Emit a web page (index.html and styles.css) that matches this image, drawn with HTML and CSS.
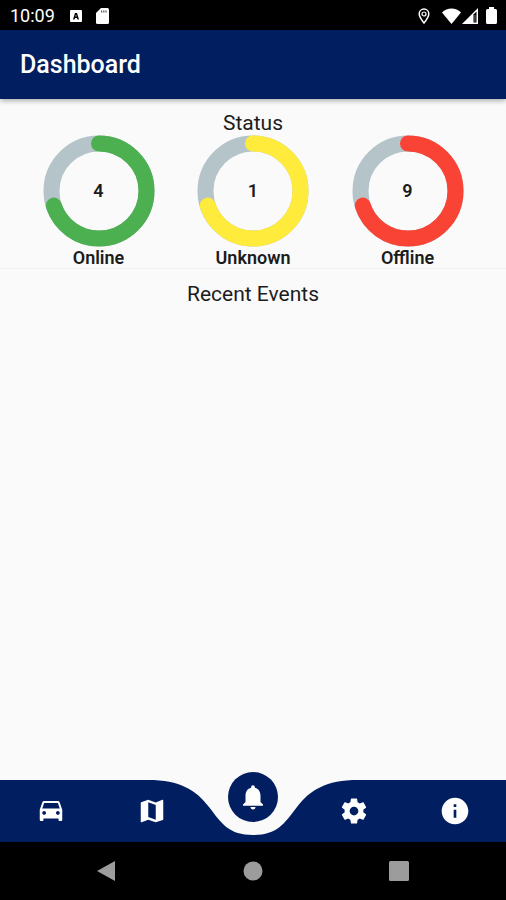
FILE: index.html
```html
<!DOCTYPE html>
<html lang="en">
<head>
  <meta charset="UTF-8"><title>Dashboard</title>
  <meta name="viewport" content="width=device-width,initial-scale=1">
  <link rel="stylesheet" href="styles.css">
</head>
<body>

  <!-- Phone status bar -->
  <div class="system-bar">
    <span class="clock">10:09</span>
    <svg class="icon-a" width="12" height="12" viewBox="0 0 12 12"><rect width="12" height="12" rx="1" fill="#fff"/><path d="M3 9.500L5 3h2l2 6.500H7.500L7 8H5l-.5 1.500zM5.400 6.500h1.200L6 4.600z" fill="#000"/></svg>
    <svg width="13" height="16" viewBox="0 0 13 16"><path d="M5 0h6.500Q13 0 13 1.500v13Q13 16 11.500 16h-10Q0 16 0 14.500V5z" fill="#fff"/><path d="M5 2.500h1.200v2H5zM7.200 2.500h1.200v2H7.200zM9.400 2.500h1.200v2H9.400z" fill="#555"/></svg>
    <div class="system-icons">
      <svg width="12" height="16" viewBox="0 0 12 16"><path d="M6 1a4.800 4.800 0 0 0-4.800 4.800C1.200 9.200 6 15 6 15s4.800-5.800 4.800-9.200A4.800 4.800 0 0 0 6 1z" fill="none" stroke="#fff" stroke-width="1.500"/><circle cx="6" cy="6" r="2" fill="none" stroke="#fff" stroke-width="1.200"/></svg>
      <svg class="icon-wifi" width="19" height="16" viewBox="0 0 19 16"><path d="M9.500 16L0 4.500C5 -.8 14 -.8 19 4.500z" fill="#fff"/></svg>
      <svg width="16" height="16" viewBox="0 0 16 16"><path d="M16 0v16H0z" fill="#fff"/><path d="M11.500 6.500L14.500 3.500v11h-3z" fill="#000"/><path d="M12.500 7h1v7h-1z" fill="#777"/></svg>
      <svg class="icon-battery" width="11" height="17" viewBox="0 0 11 17"><path d="M3 0h5v2h1.500Q11 2 11 3.500v12Q11 17 9.500 17h-8Q0 17 0 15.500v-12Q0 2 1.500 2H3z" fill="#fff"/></svg>
    </div>
  </div>

  <header>
    <h1>Dashboard</h1>
  </header>

  <main>
    <section class="status">
      <h2>Status</h2>
      <div class="rings">
        <div class="ring online">
          <svg viewBox="0 0 112 112"><circle class="track" cx="56" cy="56" r="47.500"/><circle class="value" cx="56" cy="56" r="47.500" pathLength="100"/></svg>
          <span class="count">4</span>
          <span class="label">Online</span>
        </div>
        <div class="ring unknown">
          <svg viewBox="0 0 112 112"><circle class="track" cx="56" cy="56" r="47.500"/><circle class="value" cx="56" cy="56" r="47.500" pathLength="100"/></svg>
          <span class="count">1</span>
          <span class="label">Unknown</span>
        </div>
        <div class="ring offline">
          <svg viewBox="0 0 112 112"><circle class="track" cx="56" cy="56" r="47.500"/><circle class="value" cx="56" cy="56" r="47.500" pathLength="100"/></svg>
          <span class="count">9</span>
          <span class="label">Offline</span>
        </div>
      </div>
    </section>

    <section class="events">
      <h2>Recent Events</h2>
    </section>
  </main>

  <!-- Tab bar with the curved notch -->
  <nav class="tabs">
    <div class="tabs-shape">
      <span></span>
      <svg width="210" height="62" viewBox="0 0 210 62"><path d="M0 0C32 0 48 10 61 27C74 44 81 55 105 55C129 55 136 44 149 27C162 10 178 0 210 0V62H0z"/></svg>
      <span></span>
    </div>
    <button type="button" aria-label="Vehicles"><svg viewBox="0 0 24 24"><path d="M18.920 5.010C18.720 4.420 18.160 4 17.500 4h-11c-.66 0-1.210.42-1.420 1.010L3 11v8c0 .55.45 1 1 1h1c.55 0 1-.45 1-1v-1h12v1c0 .55.45 1 1 1h1c.55 0 1-.45 1-1v-8l-2.080-5.990zM6.500 15c-.83 0-1.500-.67-1.500-1.500S5.670 12 6.500 12s1.500.67 1.500 1.500S7.330 15 6.500 15zm11 0c-.83 0-1.500-.67-1.500-1.500s.67-1.500 1.500-1.500 1.500.67 1.500 1.500-.67 1.500-1.500 1.500zM5 10l1.500-4.500h11L19 10H5z"/></svg></button>
    <button type="button" aria-label="Map"><svg viewBox="0 0 24 24"><path d="M20.500 3l-.16.03L15 5.100 9 3 3.360 4.900c-.21.07-.36.25-.36.48V20.500c0 .28.22.5.5.5l.16-.03L9 18.900l6 2.100 5.640-1.900c.21-.07.36-.25.36-.48V3.500c0-.28-.22-.5-.5-.5zM15 19l-6-2.110V5l6 2.110V19z"/></svg></button>
    <button type="button" class="active" aria-label="Dashboard"><svg viewBox="0 0 24 24"><path d="M12 22c1.100 0 2-.9 2-2h-4c0 1.100.89 2 2 2zm6-6v-5c0-3.070-1.640-5.640-4.500-6.320V4c0-.83-.67-1.500-1.500-1.500s-1.500.67-1.500 1.500v.68C7.630 5.360 6 7.920 6 11v5l-2 2v1h16v-1l-2-2z"/></svg></button>
    <button type="button" aria-label="Settings"><svg viewBox="0 0 24 24"><path d="M19.430 12.980c.04-.32.07-.64.07-.98s-.03-.66-.07-.98l2.110-1.650c.19-.15.24-.42.12-.64l-2-3.460c-.12-.22-.39-.3-.61-.22l-2.490 1c-.52-.4-1.080-.73-1.690-.98l-.38-2.650C14.460 2.180 14.250 2 14 2h-4c-.25 0-.46.18-.49.42l-.38 2.650c-.61.25-1.170.59-1.690.98l-2.490-1c-.23-.09-.49 0-.61.22l-2 3.460c-.13.22-.07.49.12.64l2.110 1.650c-.04.32-.07.65-.07.98s.03.66.07.98l-2.110 1.650c-.19.15-.24.42-.12.64l2 3.460c.12.22.39.3.61.22l2.490-1c.52.4 1.080.73 1.690.98l.38 2.650c.03.24.24.42.49.42h4c.25 0 .46-.18.49-.42l.38-2.650c.61-.25 1.170-.59 1.690-.98l2.490 1c.23.09.49 0 .61-.22l2-3.460c.12-.22.07-.49-.12-.64l-2.110-1.650zM12 15.500c-1.930 0-3.500-1.570-3.500-3.500s1.570-3.500 3.500-3.500 3.500 1.570 3.500 3.500-1.570 3.500-3.500 3.500z"/></svg></button>
    <button type="button" aria-label="About"><svg class="info" viewBox="0 0 24 24"><path d="M12 2C6.480 2 2 6.480 2 12s4.480 10 10 10 10-4.480 10-10S17.520 2 12 2zm1 15h-2v-6h2v6zm0-8h-2V7h2v2z"/></svg></button>
  </nav>

  <div class="system-nav">
    <button type="button" aria-label="Back"><svg width="20" height="22" viewBox="0 0 20 22"><path d="M18 1v20L0 11z"/></svg></button>
    <button type="button" aria-label="Home"><svg width="20" height="20" viewBox="0 0 20 20"><circle cx="10" cy="10" r="9.500"/></svg></button>
    <button type="button" aria-label="Recent apps"><svg width="20" height="20" viewBox="0 0 20 20"><rect width="20" height="20" rx="1.500"/></svg></button>
  </div>

</body>
</html>
```
FILE: styles.css
```css
* { margin:0; padding:0; box-sizing:border-box }
body { font-family:Roboto,sans-serif; background:#fafafa; color:#1c1c1c; min-height:100vh;
  display:flex; flex-direction:column;
}
button { background:none; border:none; cursor:pointer; }

/* Phone status bar */
.system-bar { display:flex; align-items:center; height:30px; padding:1px 9px 0 10px; background:#000; color:#fff; }
.clock { font-size:18px; line-height:29px; }
.icon-a { margin:0 14px 0 15px; }
.system-icons { display:flex; align-items:center; margin-left:auto; }
.icon-wifi { margin:0 1px 0 12px; }
.icon-battery { margin-left:8px; }

/* Header */
header { background:#001e60; color:#fff; padding:20px; box-shadow:0 1px 6px rgba(0,0,0,.4); }
header h1 { font-size:25px; line-height:29px; font-weight:500; }

main { flex:1; }
h2 { font-size:21px; line-height:24px; font-weight:400; text-align:center; }

/* Status rings */
.status { padding:12px 0 0; border-bottom:1px solid #f0f0f0; }
.rings { display:flex; justify-content:space-evenly; }
.ring { position:relative; width:112px; text-align:center; }
.ring svg { display:block; width:112px; height:112px; transform:rotate(-90deg); }
.ring circle { fill:none; stroke-width:16; }
.track { stroke:#b4c4c8; }
.value { stroke-linecap:round; stroke-dasharray:70 100; }
.online .value { stroke:#4caf50; }
.unknown .value { stroke:#ffeb3b; }
.offline .value { stroke:#f94335; }
.count { position:absolute; top:0; left:0; width:100%; line-height:112px; font-size:18px; font-weight:600; }
.label { display:block; font-size:18px; line-height:21px; font-weight:600; }

.events { padding:13px 0; }

/* Tab bar */
.tabs { position:relative; display:flex; height:62px; }
.tabs-shape { position:absolute; inset:0; display:flex; }
.tabs-shape span { flex:1; background:#001e60; }
.tabs-shape svg { fill:#001e60; }
.tabs button { position:relative; flex:1; display:flex; justify-content:center; align-items:center; }
.tabs button svg { width:30px; height:30px; fill:#fff; }
.tabs button .info { width:32px; height:32px; }
.tabs .active svg { position:absolute; top:-8px; width:50px; height:50px; padding:10px; border-radius:50%; background:#001e60; }

/* Phone navigation */
.system-nav { display:flex; justify-content:center; align-items:center; height:58px; background:#000; }
.system-nav button { width:146px; display:flex; justify-content:center; align-items:center; }
.system-nav svg { fill:#9c9c9c; }
```
